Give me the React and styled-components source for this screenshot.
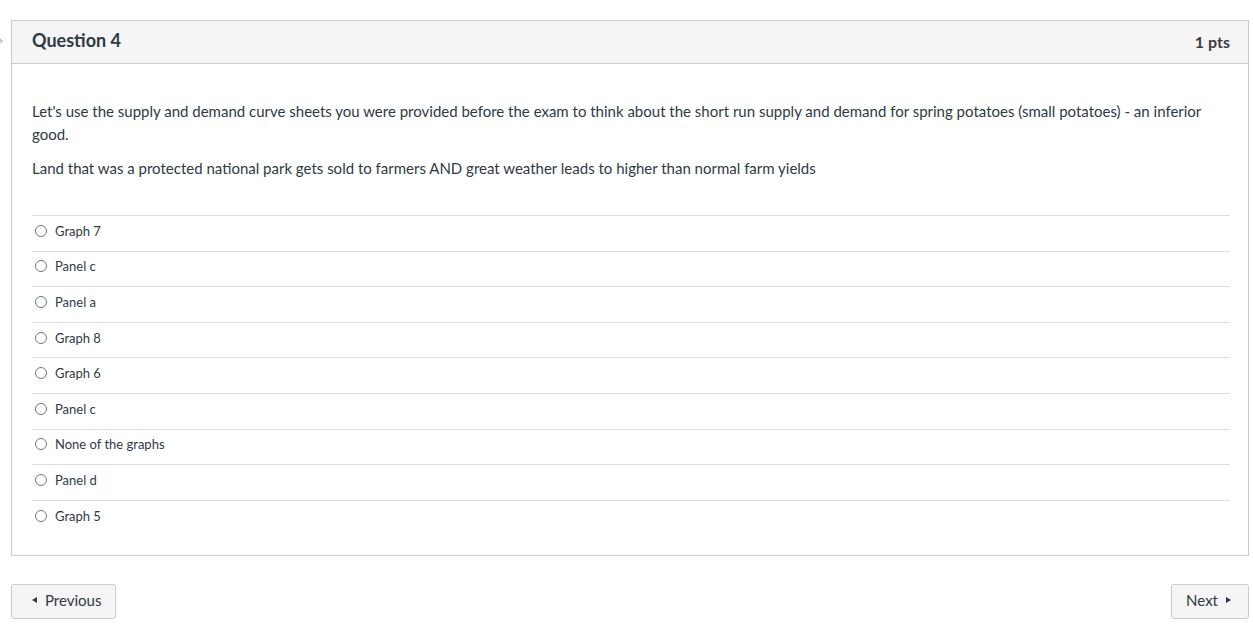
import React from 'react';
import styled, { createGlobalStyle } from 'styled-components';

const GlobalStyle = createGlobalStyle`
  body {
    margin: 0;
    background: #ffffff;
    font-family: Lato, "Liberation Sans", sans-serif;
    color: #2d3b45;
  }
`;

const Page = styled.div`
  position: relative;
  padding: 20px 4px 0 11px;
`;

const SideMarker = styled.svg`
  position: absolute;
  left: -4px;
  top: 36px;
`;

const QuestionBox = styled.div`
  border: 1px solid #c7cdd1;
  background: #ffffff;
`;

const Header = styled.div`
  display: flex;
  align-items: center;
  justify-content: space-between;
  height: 42px;
  padding: 0 18px 0 20px;
  background: #f5f5f5;
  border-bottom: 1px solid #c7cdd1;
`;

const Title = styled.div`
  font-size: 18px;
  font-weight: 700;
  color: #2d3b45;
  margin-top: -5px;
`;

const Points = styled.div`
  font-size: 16px;
  font-weight: 700;
  color: #3d3d3d;
  margin-top: -2px;
`;

const Body = styled.div`
  padding: 36px 18px 20px 20px;
`;

const Para = styled.p`
  margin: 0 0 11px;
  font-size: 15px;
  line-height: 23px;
  color: #2d3b45;
`;

const Answers = styled.div`
  margin-top: 35px;
`;

const AnswerRow = styled.label`
  display: flex;
  align-items: center;
  box-sizing: border-box;
  height: 35.6px;
  padding: 0 0 5px 3px;
  border-top: 1px solid #dcdfe1;
  font-size: 13px;
  color: #2d3b45;
`;

const Radio = styled.span`
  width: 10px;
  height: 10px;
  border: 1px solid #6b7780;
  border-radius: 50%;
  margin-right: 8px;
`;

const Nav = styled.div`
  display: flex;
  justify-content: space-between;
  margin-top: 28px;
`;

const NavButton = styled.button`
  display: flex;
  align-items: center;
  gap: 8px;
  box-sizing: border-box;
  height: 35px;
  padding: ${p => (p.$next ? '0 17px 3px 14px' : '0 14px 3px 20px')};
  background: #f5f5f5;
  border: 1px solid #c7cdd1;
  border-radius: 3px;
  font-family: Lato, "Liberation Sans", sans-serif;
  font-size: 15px;
  color: #2d3b45;
`;

const Caret = ({ dir }) => (
  <svg width="5" height="6" viewBox="0 0 5 6">
    {dir === 'left'
      ? <polygon points="5,0 0,3 5,6" fill="#2d3b45" />
      : <polygon points="0,0 5,3 0,6" fill="#2d3b45" />}
  </svg>
);

const options = [
  'Graph 7',
  'Panel c',
  'Panel a',
  'Graph 8',
  'Graph 6',
  'Panel c',
  'None of the graphs',
  'Panel d',
  'Graph 5',
];

export default function App() {
  return (
    <>
      <GlobalStyle />
      <Page>
        <SideMarker width="8" height="10" viewBox="0 0 8 10">
          <path d="M1 1 L6 5 L1 9" fill="none" stroke="#9cc2dd" strokeWidth="1.5" />
        </SideMarker>
        <QuestionBox>
          <Header>
            <Title>Question 4</Title>
            <Points>1 pts</Points>
          </Header>
          <Body>
            <Para>
              Let's use the supply and demand curve sheets you were provided before the exam to think about the short run supply and demand for spring potatoes (small potatoes) - an inferior good.
            </Para>
            <Para>
              Land that was a protected national park gets sold to farmers AND great weather leads to higher than normal farm yields
            </Para>
            <Answers>
              {options.map((label, i) => (
                <AnswerRow key={i}>
                  <Radio />
                  {label}
                </AnswerRow>
              ))}
            </Answers>
          </Body>
        </QuestionBox>
        <Nav>
          <NavButton>
            <Caret dir="left" />
            Previous
          </NavButton>
          <NavButton $next>
            Next
            <Caret dir="right" />
          </NavButton>
        </Nav>
      </Page>
    </>
  );
}
